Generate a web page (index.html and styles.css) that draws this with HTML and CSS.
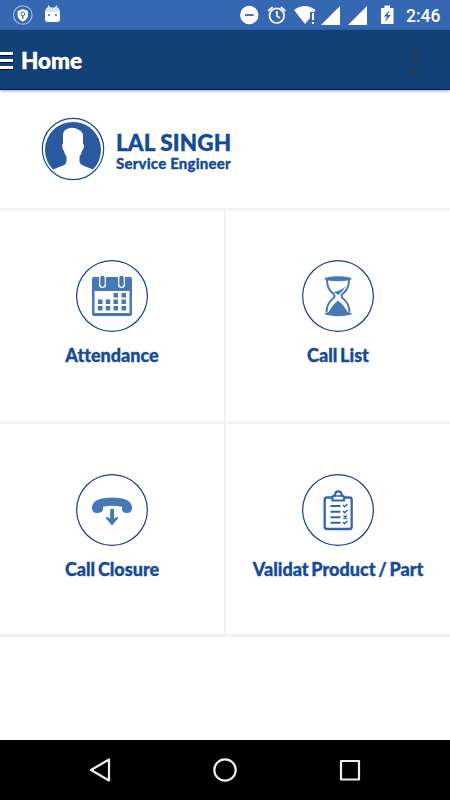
FILE: index.html
```html
<!DOCTYPE html>
<html lang="en">
<head>
<meta charset="utf-8">
<title>Home</title>
<link rel="stylesheet" href="styles.css">
</head>
<body>
<div class="status">
  <svg class="status-left" width="80" height="30" viewBox="0 0 80 30">
    <circle cx="22.8" cy="15" r="9.3" fill="none" stroke="#a9c0e4" stroke-width="1.1"/>
    <path d="M22.8 9L28 11V15.500Q27.500 19.500 22.800 21.700Q18 19.500 17.600 15.500V11Z" fill="#fff"/>
    <circle cx="22.800" cy="14" r="1.900" fill="#fff" stroke="#3567b2" stroke-width="1"/>
    <path d="M22.800 15.500V18.800" stroke="#3567b2" stroke-width="1.300"/>
    <path d="M48.300 5.500L50 9M56.700 5.500L55 9" stroke="#fff" stroke-width="1.200"/>
    <path d="M47 7.500H58L60 11V19Q60 22 57 22H48Q45 22 45 19V11Z" fill="#fff"/>
    <path d="M47 8H58L59.500 12H45.500Z" fill="#d5e2f4"/>
    <circle cx="49" cy="15" r="1" fill="#3567b2"/><circle cx="56" cy="15" r="1" fill="#3567b2"/>
  </svg>
  <div class="status-right">
    <svg width="165" height="30" viewBox="235 0 165 30" fill="#fff">
      <circle cx="249.300" cy="15" r="9.200"/>
      <path d="M245 15H253.700" stroke="#3567b2" stroke-width="1.800"/>
      <g fill="none" stroke="#fff" stroke-width="1.700"><circle cx="276.800" cy="15.700" r="7.300"/><path d="M276.800 11V16L280 18M268.200 11L272.700 7M285.400 11L280.900 7"/></g>
      <path d="M294 10Q304.500 2 315.500 10L314 12H310V18L305 24Z"/>
      <path d="M312 13H314V20H312ZM312 22H314V24H312Z"/>
      <path d="M340 6V25H321Z M367 6V25H348Z"/>
      <path d="M381 8H384.500V5.500H390V8H393.500V24H381Z"/>
      <path d="M389.500 10L383.800 16.500H387L385 22L391 15H387.700Z" fill="#3567b2"/>
    </svg>
    <span class="clock">2:46</span>
  </div>
</div>
<header class="bar">
  <span class="burger"><i></i><i></i><i></i></span>
  <h1>Home</h1>
  <span class="more"><i></i><i></i><i></i></span>
</header>
<section class="profile">
  <svg width="64" height="64" viewBox="0 0 64 64">
    <circle cx="32" cy="32" r="30.700" fill="#fff" stroke="#184b97" stroke-width="1.200"/>
    <path d="M12 52.500A28 28 0 1 1 52 52.500L42 48.500Q38 47 38.500 43V39.500Q40.500 37 41 34Q42.500 33 43 29Q43 27 42 27V20Q42.500 15 38 13Q32 9 26 12Q21.500 14 22 20V27Q21 27 21.200 29Q21.500 33 23 34Q23.500 37 25.500 39.500V44Q25.500 47 22 48.500Z" fill="#2b5aa0"/>
  </svg>
  <div class="who"><div class="name">LAL SINGH</div><div class="role">Service Engineer</div></div>
</section>
<main class="grid">
  <div class="tile">
    <svg class="icon" viewBox="0 0 72 72">
      <path d="M18 17H54Q56 17 56 19V54Q56 56 54 56H18Q16 56 16 54V19Q16 17 18 17Z" fill="#4778b5"/>
      <path d="M18.500 31H53.500V53H18.500Z" fill="#fff"/>
      <path d="M23 15H30V25Q30 28 26.500 28Q23 28 23 25ZM42 15H49V25Q49 28 45.500 28Q42 28 42 25Z" fill="#fff"/>
      <path d="M26.500 18V24.500M45.500 18V24.500" stroke="#4778b5" stroke-width="4.400" stroke-linecap="round"/>
      <path d="M37.500 33H42V37.500H37.500ZM45.500 33H50V37.500H45.500ZM22 39.500H26.500V44H22ZM29.700 39.500H34.200V44H29.700ZM37.500 39.500H42V44H37.500ZM45.500 39.500H50V44H45.500ZM22 46H26.500V50.500H22ZM29.700 46H34.200V50.500H29.700ZM37.500 46H42V50.500H37.500ZM45.500 46H50V50.500H45.500Z" fill="#4778b5"/>
    </svg>
    <div class="label">Attendance</div>
  </div>
  <div class="tile">
    <svg class="icon" viewBox="0 0 72 72">
      <path d="M25 20Q25 29 31 33.500Q34 36 31 38.500Q25 43 24.500 52M47 20Q47 29 41 33.500Q38 36 41 38.500Q47 43 47.500 52" fill="none" stroke="#4778b5" stroke-width="2"/>
      <ellipse cx="36" cy="18.700" rx="13.500" ry="2.500" fill="#4778b5"/>
      <path d="M23 53Q36 48 49.500 53V54.500Q36 58 23 54.500Z" fill="#4778b5"/>
      <path d="M26.500 53Q29 46 36 40.500Q43 46 46 53Z" fill="#4778b5"/>
      <path d="M44 26Q41 31 36.500 35L31.500 32Q39 31 44 26Z" fill="#4778b5"/>
    </svg>
    <div class="label">Call List</div>
  </div>
  <div class="tile">
    <svg class="icon" viewBox="0 0 72 72">
      <path d="M16 34Q16 23.500 36 23.500Q56 23.500 56 34Q56 39 51 39Q46 39 46 35V32.800Q36 30.500 27 32.800V35Q27 39 21 39Q16 39 16 34Z" fill="#4778b5"/>
      <path d="M34.200 35H38V44.500L42 42.700V44.500L36 51.500L30 44.500V42.700L34.200 44.500Z" fill="#4778b5"/>
    </svg>
    <div class="label">Call Closure</div>
  </div>
  <div class="tile">
    <svg class="icon" viewBox="0 0 72 72" fill="none" stroke="#2e66ad">
      <rect x="22.700" y="23.500" width="27" height="31.500" rx="2.300" stroke-width="2.300"/>
      <path d="M30.500 26.500V23Q30.500 21.500 33 21.500Q33 17.300 36.300 17.300Q39.600 17.300 39.600 21.500Q42 21.500 42 23V26.500Z" fill="#fff" stroke-width="2.200"/>
      <path d="M32 22H41" stroke-width="1.700"/>
      <path d="M28.500 32H38.500M28.500 37.700H38.500M28.500 43.200H38.500M28.500 48.700H38.500" stroke-width="1.900"/>
      <path d="M41 31L42.500 32.700L45.500 30M41 37L42.500 38.700L45.500 36M41.500 41.500L45 45M45 41.500L41.500 45M41 48L42.500 49.700L45.500 47" stroke-width="1.500"/>
    </svg>
    <div class="label">Validat Product / Part</div>
  </div>
</main>
<nav class="nav">
  <svg width="450" height="60" viewBox="0 0 450 60" fill="none" stroke="#eee" stroke-width="2.200" stroke-linejoin="round">
    <path d="M91 30L109 19.500V40.500Z"/><circle cx="225" cy="30" r="10.700"/><rect x="341" y="21" width="18" height="18.500"/>
  </svg>
</nav>
</body>
</html>
```
FILE: styles.css
```css
* { box-sizing: border-box; }
body {
  margin: 0;
  width: 450px;
  height: 800px;
  overflow: hidden;
  display: flex;
  flex-direction: column;
  background: #fff;
  color: #154a98;
  font-family: Lato, sans-serif;
  font-variant-ligatures: none;
}
svg { display: block; flex: none; }
.status {
  height: 30px;
  flex: none;
  display: flex;
  justify-content: space-between;
  background: #3567b2;
  color: #fff;
}
.status-right { display: flex; width: 215px; }
.clock {
  font: 500 17.500px/32px Roboto, sans-serif;
  padding-left: 6px;
  white-space: nowrap;
}
.bar {
  height: 60px;
  flex: none;
  display: flex;
  align-items: center;
  background: #124178;
  border-bottom: 1px solid #061c62;
  box-shadow: 0 1px 3px rgba(0, 0, 0, .35);
  color: #fff;
}
.burger { width: 13px; display: grid; gap: 4px; padding-top: 2px; }
.burger i { height: 3px; background: #fff; box-shadow: 0 1px 0 #00075e; }
.bar h1 {
  margin: 3px 0 0 8px;
  font-size: 22.500px;
  line-height: 28px;
  font-weight: 900;
  -webkit-text-stroke: .5px #fff;
  text-shadow: 0 1px 1px #00075e;
}
.more { display: grid; gap: 3px; margin: 2px 32px 0 auto; }
.more i { width: 6px; height: 6px; background: #263c59; }
.profile {
  height: 118px;
  flex: none;
  display: flex;
  align-items: center;
  padding-left: 40.500px;
}
.who { margin-left: 11.500px; padding-top: 6px; white-space: nowrap; }
.name {
  font-size: 22.500px;
  line-height: 23px;
  font-weight: 900;
  letter-spacing: .1px;
  -webkit-text-stroke: .4px;
}
.role {
  font-size: 15px;
  line-height: 19px;
  font-weight: 900;
  letter-spacing: .2px;
  -webkit-text-stroke: .3px;
}
.grid {
  height: 429px;
  flex: none;
  display: grid;
  grid-template: 213px 213px / 1fr 1fr;
  border-bottom: 3px solid #f2f2f2;
}
.tile {
  border-top: 3px solid #f2f2f2;
  padding-top: 49px;
  display: flex;
  flex-direction: column;
  align-items: center;
}
.tile:nth-child(n+3) { padding-top: 50px; }
.tile:nth-child(odd) { border-right: 1px solid #f2f2f2; }
.tile:nth-child(even) { border-left: 1px solid #f2f2f2; }
.icon {
  width: 72px;
  height: 72px;
  border-radius: 50%;
  box-shadow: inset 0 0 0 1.200px #123c96;
}
.label {
  margin-top: 11px;
  font-size: 18px;
  line-height: 24px;
  font-weight: 900;
  word-spacing: -1.500px;
  -webkit-text-stroke: .35px;
  white-space: nowrap;
}
.nav { margin-top: auto; height: 60px; background: #000; }
```
